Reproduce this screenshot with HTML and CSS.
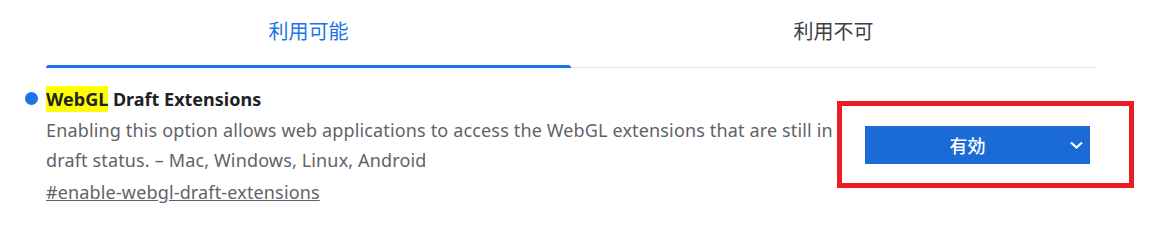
FILE: index.html
```html
<!DOCTYPE html>
<html lang="ja">
<head>
    <meta charset="UTF-8">
    <meta name="viewport" content="width=device-width, initial-scale=1.0">
    <title>Flags</title>
    <link rel="stylesheet" href="styles.css">
</head>
<body>
    <div class="page">
        <div class="tabs">
            <div class="tab active">利用可能</div>
            <div class="tab">利用不可</div>
        </div>

        <div class="flag">
            <div class="flag-info">
                <h3 class="flag-name"><span class="mark">WebGL</span> Draft Extensions</h3>
                <p class="flag-desc">Enabling this option allows web applications to access the WebGL extensions that are still in draft status. – Mac, Windows, Linux, Android</p>
                <a href="#" class="flag-link">#enable-webgl-draft-extensions</a>
            </div>
            <div class="flag-action">
                <div class="select">
                    <span class="select-label">有効</span>
                    <svg class="chevron" width="13" height="8" viewBox="0 0 13 8">
                        <path d="M1 1.5 L6.5 6.5 L12 1.5" fill="none" stroke="#fff" stroke-width="2.2"/>
                    </svg>
                </div>
            </div>
        </div>
    </div>
</body>
</html>
```

FILE: styles.css
```css
body {
    margin: 0;
    background: #fff;
    font-family: "Noto Sans", "Noto Sans CJK JP", sans-serif;
}

.page {
    padding-left: 46px;
}

.tabs {
    display: flex;
    width: 1050px;
    border-bottom: 1px solid #e6e6e6;
}

.tab {
    flex: 1;
    height: 48px;
    padding-top: 19px;
    position: relative;
    text-align: center;
    font-family: "Noto Sans CJK JP", sans-serif;
    font-size: 20px;
    line-height: 24px;
    color: #3c4043;
}

.tab.active {
    color: #1a73e8;
}

.tab.active::after {
    content: "";
    position: absolute;
    left: 0;
    right: 0;
    bottom: -1px;
    height: 3px;
    background: #1a73e8;
    border-radius: 3px 3px 0 0;
}

.flag {
    display: flex;
    align-items: flex-start;
    padding-top: 18px;
}

.flag-info {
    width: 791px;
}

.flag-name {
    position: relative;
    margin: 0;
    font-size: 18px;
    line-height: 26px;
    font-weight: bold;
    color: #202124;
}

.flag-name::before {
    content: "";
    position: absolute;
    left: -21px;
    top: 6px;
    width: 13px;
    height: 13px;
    border-radius: 50%;
    background: #1a73e8;
}

.mark {
    background: #ffff00;
    padding: 1px 0;
}

.flag-desc {
    margin: 3px 0 0;
    font-size: 18px;
    letter-spacing: 0.15px;
    line-height: 30px;
    color: #5f6368;
}

.flag-link {
    display: inline-block;
    margin-top: 3px;
    font-size: 18px;
    letter-spacing: 0.15px;
    line-height: 28px;
    color: #5f6368;
}

.flag-action {
    margin-top: 15px;
    border: 5px solid #ed1c24;
    padding: 20px 0 0 23px;
    box-sizing: border-box;
    width: 297px;
    height: 87px;
}

.select {
    display: flex;
    align-items: center;
    width: 225px;
    height: 38px;
    padding-right: 7px;
    box-sizing: border-box;
    background: #1a6bd5;
    color: #fff;
}

.select-label {
    flex: 1;
    text-align: center;
    font-family: "Noto Sans CJK JP", sans-serif;
    font-size: 18px;
    font-weight: 500;
}

.chevron {
    display: block;
}
```
